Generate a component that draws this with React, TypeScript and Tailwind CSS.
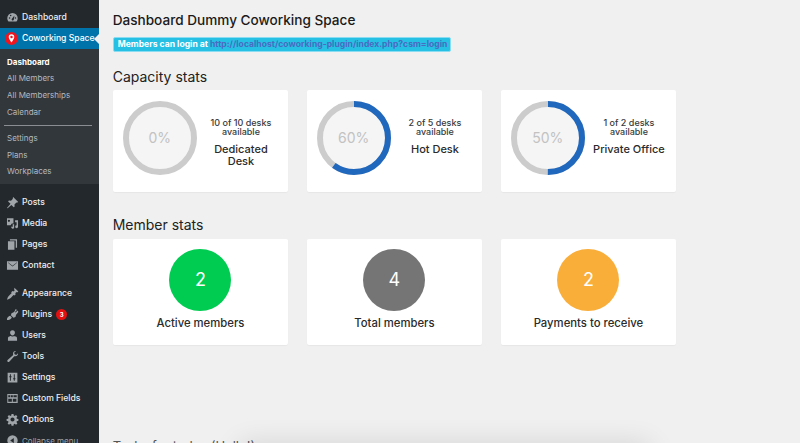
import React from "react";

const P = (d: string) => <path d={d} fill="currentColor" />;
const icons: Record<string, React.ReactNode> = {
  dashboard: <><path fillRule="evenodd" fill="currentColor" d="M10 3a8 8 0 0 0-8 8c0 2 .7 3.800 2 5.200h12c1.300-1.400 2-3.200 2-5.200a8 8 0 0 0-8-8zM5.500 12a1.200 1.200 0 1 1 0-2.400 1.200 1.200 0 0 1 0 2.400zm1.700-4a1.200 1.200 0 1 1 0-2.400 1.200 1.200 0 0 1 0 2.400zm3.800 6.500a1.700 1.700 0 0 1-2.200-2.200L13 7l-1 6.500zm3.500-2.500a1.200 1.200 0 1 1 0-2.400 1.200 1.200 0 0 1 0 2.400z" /></>,
  posts: P("M11 1.500l7.500 7.500-1.300 1.300-1.200-.4-3 3 .3 3.200-1.300 1.300-3.700-3.700L2.500 19l-1-.6 5.500-6.400-3.800-3.700 1.300-1.300 3.200.3 3-3-.4-1z"),
  media: <><path fill="currentColor" fillRule="evenodd" d="M1.500 2h10v8H9l-2 2.500H1.500zm3 2.200a1.700 1.700 0 1 0 0 3.400 1.700 1.700 0 0 0 0-3.400z" /><path fill="currentColor" d="M14 5h4.500v10a2.200 2.200 0 1 1-2.200-2.200V8H14zM8.500 14.500a1.800 1.800 0 0 1 1.800.8V11h2.200v5.800a2.200 2.200 0 1 1-4-2.300z" /></>,
  pages: P("M6 2h11v13h-2V4H6zM3 5h10v13H3z"),
  contact: <path fill="currentColor" fillRule="evenodd" d="M1.500 3.500h17v13h-17zm1.500 2.200L10 11.500l7-5.800v-.7L10 10.300 3 5z" />,
  appearance: P("M13 1l6 6-2 1.500-1-1-1.800 2 .8 1.500-2 2-1.500-.6-2.500 2.600c-1.200 1.200-2.500 3-7.500 4.500 1.500-5 3.300-6.300 4.500-7.500l2.600-2.500-.6-1.500 2-2 1.500.8 2-1.800-1-1z"),
  plugins: P("M15 1.500l1.800 1.500-3 3 1 1 3-3L19 6 15.500 10.500l-1 3.500-3 1-4-4 1-3 4-1.700zM6.500 12l2.500 2.500c-1 2-3.500 3.500-5.500 4H1.500v-2c1-2.500 3-4 5-4.500z"),
  users: P("M10 2a3.700 3.700 0 0 1 3.700 3.900c0 2-1.500 4.100-3.700 4.100S6.300 7.900 6.300 5.900A3.700 3.700 0 0 1 10 2zM4 12c1.500-.8 3-1 3.800-1.300.6.800 1.300 1 2.200 1s1.600-.2 2.200-1c.8.300 2.300.5 3.800 1.300.8.500 1 1.500 1 3v3H3v-3c0-1.500.2-2.500 1-3z"),
  tools: P("M15.500 1.500c-2.500-.5-5 1.500-4.700 4.700 0 .5.100.9.300 1.300L2.500 15.500a1.800 1.800 0 0 0 0 2.500 1.800 1.800 0 0 0 2.500 0l7.800-8.500c.5.200 1 .3 1.500.3 3 0 4.700-2.500 4.200-4.800l-2.800 2.700-2.500-1-.7-2.500z"),
  settings: <path fill="currentColor" fillRule="evenodd" d="M2.500 2.500h15v15h-15zM6 5v3H5v1.500h1V15h1.500V9.500h1V8h-1V5zm6 0v6h-1v1.500h1V15h1.500v-2.500h1V11h-1V5z" />,
  fields: <path fill="currentColor" fillRule="evenodd" d="M2 3h16v14H2zm1.500 2v3h3V5zm4 0v3h3V5zm4 0v3h5V5zm-8 5.500V15h5.500v-4.500zm7 0V15h5.500v-4.500z" />,
  options: <path fill="currentColor" fillRule="evenodd" d="M8.500 1.500h3l.4 2.400 1.500.6 2-1.400 2.100 2.100-1.400 2 .6 1.500 2.400.4v3l-2.400.4-.6 1.500 1.400 2-2.100 2.100-2-1.400-1.500.6-.4 2.400h-3l-.4-2.400-1.500-.6-2 1.400-2.100-2.100 1.400-2-.6-1.500-2.400-.4v-3l2.400-.4.6-1.500-1.400-2 2.100-2.100 2 1.400 1.500-.6zM10 6.800a3.200 3.200 0 1 0 0 6.400 3.200 3.200 0 0 0 0-6.400z" />,
  collapse: <path fill="currentColor" fillRule="evenodd" d="M10 2a8 8 0 1 1 0 16 8 8 0 0 1 0-16zm2 4L6.500 10l5.500 4z" />,
};

function Icon({ name }: { name: string }) {
  return (
    <svg viewBox="0 0 20 20" className="w-[13px] h-[13px] text-[#a0a5aa] shrink-0">
      {icons[name]}
    </svg>
  );
}

function Item({ icon, label, children }: { icon: string; label: string; children?: React.ReactNode }) {
  return (
    <div className="h-[21px] flex items-center pl-[6px] text-[8.600px] font-medium text-[#eeeeee] whitespace-nowrap">
      <span className="w-[13px] mr-[3px] flex"><Icon name={icon} /></span>
      <span>{label}</span>
      {children}
    </div>
  );
}

function SubItem({ label, current }: { label: string; current?: boolean }) {
  return (
    <div className={current ? "h-[16.600px] pl-[7px] flex items-center text-[8px] font-bold text-white" : "h-[16.600px] pl-[7px] flex items-center text-[8px] text-[#b4b9be]"}>
      {label}
    </div>
  );
}

function Ring({ pct }: { pct: number }) {
  const r = 34;
  const c = 2 * Math.PI * r;
  return (
    <div className="grid place-items-center w-[74px] h-[74px] shrink-0">
      <svg viewBox="0 0 74 74" className="w-[74px] h-[74px] col-start-1 row-start-1">
        <circle cx="37" cy="37" r="31" fill="#f5f5f5" />
        <circle cx="37" cy="37" r={r} fill="none" stroke="#cccccc" strokeWidth="6" />
        {pct > 0 && (
          <circle cx="37" cy="37" r={r} fill="none" stroke="#2068bd" strokeWidth="6" strokeDasharray={`${(c * pct) / 100} ${c}`} transform="rotate(-90 37 37)" />
        )}
      </svg>
      <span className="col-start-1 row-start-1 text-[14px] text-[#c2c2c2]">{pct}%</span>
    </div>
  );
}

function CapacityCard({ pct, avail, title }: { pct: number; avail: string; title: React.ReactNode }) {
  return (
    <div className="w-[175.500px] h-[102px] bg-white rounded-[2px] shadow-[0_1px_1px_rgba(0,0,0,0.04)] flex items-start pl-[10px] pt-[10.500px]">
      <Ring pct={pct} />
      <div className="flex-1 flex flex-col items-center text-center pr-[3px] pt-[17px]">
        <div className="text-[9px] leading-[9.500px] font-medium text-[#3a3a3a]">{avail}<br />available</div>
        <div className="mt-[6.500px] text-[11px] leading-[12px] font-medium text-[#2b2b2b]">{title}</div>
      </div>
    </div>
  );
}

function MemberCard({ value, label, color }: { value: number; label: string; color: string }) {
  return (
    <div className="w-[175.500px] h-[106.500px] bg-white rounded-[2px] shadow-[0_1px_1px_rgba(0,0,0,0.04)] flex flex-col items-center pt-[10px]">
      <div className={`w-[62px] h-[62px] rounded-full flex items-center justify-center text-[18px] text-white ${color}`}>{value}</div>
      <div className="mt-[5.500px] text-[11.300px] leading-[14px] font-medium text-[#2b2b2b]">{label}</div>
    </div>
  );
}

export default function App() {
  return (
    <div className="relative flex w-[800px] h-[443px] overflow-hidden bg-[#f0f0f0] font-['Inter','Liberation_Sans',sans-serif]">
      <aside className="w-[99px] shrink-0 h-full bg-[#23282d] pt-[7px]">
        <Item icon="dashboard" label="Dashboard" />
        <div className="relative h-[21px] bg-[#0073aa] flex items-center pl-[5px] text-[8.600px] font-medium text-white whitespace-nowrap">
          <svg viewBox="0 0 16 16" className="w-[13px] h-[13px] mr-[4px] shrink-0">
            <circle cx="8" cy="8" r="8" fill="#f0141e" />
            <path d="M8 2.800a3.400 3.400 0 0 0-3.400 3.400C4.600 8.500 8 13 8 13s3.400-4.500 3.400-6.800A3.400 3.400 0 0 0 8 2.800z" fill="#fff" />
            <circle cx="8" cy="6.200" r="1.500" fill="#f0141e" />
          </svg>
          Coworking Space
          <span className="absolute right-0 top-[5.500px] w-0 h-0 border-y-[5px] border-y-transparent border-r-[5px] border-r-[#f0f0f0]" />
        </div>
        <div className="bg-[#32373c] h-[135px] pt-[4.500px]">
          <SubItem label="Dashboard" current />
          <SubItem label="All Members" />
          <SubItem label="All Memberships" />
          <SubItem label="Calendar" />
          <div className="h-px bg-[#8a8e92] ml-[4px] mr-[7px] mt-[5px] mb-[4px]" />
          <SubItem label="Settings" />
          <SubItem label="Plans" />
          <SubItem label="Workplaces" />
        </div>
        <div className="mt-[8px]">
          <Item icon="posts" label="Posts" />
          <Item icon="media" label="Media" />
          <Item icon="pages" label="Pages" />
          <Item icon="contact" label="Contact" />
        </div>
        <div className="mt-[7px]">
          <Item icon="appearance" label="Appearance" />
          <Item icon="plugins" label="Plugins">
            <span className="ml-[4px] w-[11px] h-[11px] rounded-full bg-[#e60f0f] text-white text-[6px] font-bold flex items-center justify-center">3</span>
          </Item>
          <Item icon="users" label="Users" />
          <Item icon="tools" label="Tools" />
          <Item icon="settings" label="Settings" />
          <Item icon="fields" label="Custom Fields" />
          <Item icon="options" label="Options" />
          <div className="h-[21px] flex items-center pl-[6px] text-[8px] text-[#9ea3a8]">
            <span className="w-[13px] mr-[3px] flex"><Icon name="collapse" /></span>
            Collapse menu
          </div>
        </div>
      </aside>
      <main className="flex-1 pl-[13.700px] pt-[11px] min-w-0">
        <h1 className="text-[13.600px] leading-[18px] font-medium text-[#1a1a1a] whitespace-nowrap">Dashboard Dummy Coworking Space</h1>
        <div className="mt-[8px] w-[338.500px] h-[15px] bg-[#26c0e5] border border-[#8adcf0] rounded-[2px] flex items-center pl-[4px] text-[8.600px] font-bold text-white whitespace-nowrap">
          Members can login at&nbsp;<a className="text-[#4a6cc0]">http://localhost/coworking-plugin/index.php?csm=login</a>
        </div>
        <h2 className="mt-[15px] text-[14px] leading-[20px] text-[#222222]">Capacity stats</h2>
        <div className="mt-[3px] flex gap-[18.500px]">
          <CapacityCard pct={0} avail="10 of 10 desks" title={<>Dedicated<br />Desk</>} />
          <CapacityCard pct={60} avail="2 of 5 desks" title="Hot Desk" />
          <CapacityCard pct={50} avail="1 of 2 desks" title="Private Office" />
        </div>
        <h2 className="mt-[23px] text-[14px] leading-[20px] text-[#222222]">Member stats</h2>
        <div className="mt-[3.500px] flex gap-[18.500px]">
          <MemberCard value={2} label="Active members" color="bg-[#00cc52]" />
          <MemberCard value={4} label="Total members" color="bg-[#757575]" />
          <MemberCard value={2} label="Payments to receive" color="bg-[#f9ae3a]" />
        </div>
        <h2 className="mt-[93px] text-[13px] leading-[16px] text-[#555555] whitespace-nowrap">Tasks for today (Hello!)</h2>
      </main>
      <div className="absolute left-[240px] w-[410px] bottom-[-22px] h-[20px] shadow-[0_0_28px_rgba(0,0,0,0.14)]" />
    </div>
  );
}
